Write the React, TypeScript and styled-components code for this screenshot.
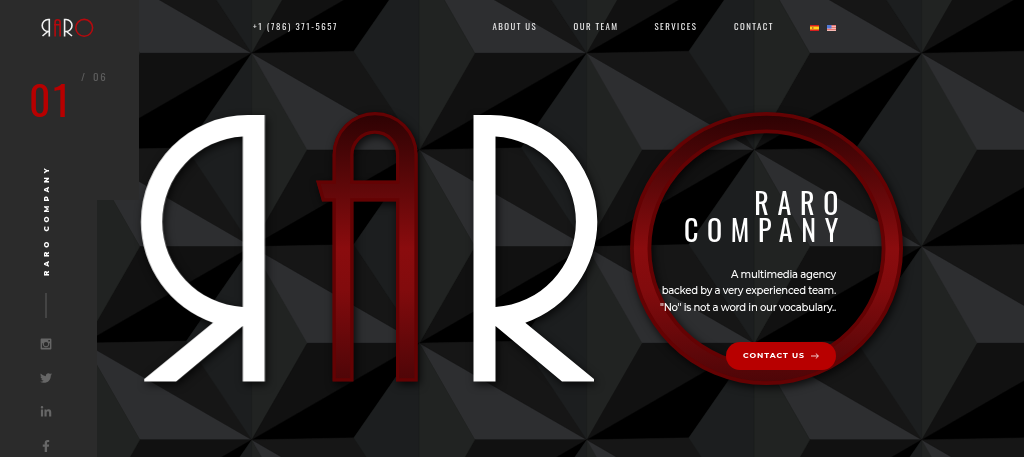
import React from "react";
import styled, { createGlobalStyle } from "styled-components";
import { FaTwitter, FaLinkedinIn, FaFacebookF } from "react-icons/fa";

const Global = createGlobalStyle`
  * { box-sizing: border-box; }
  body { margin: 0; background: #161616; overflow: hidden; }
`;

const condensed = `"Oswald", "Roboto", "Liberation Sans", sans-serif`;
const rounded = `"Montserrat", "Inter", "Liberation Sans", sans-serif`;

const Page = styled.div`
  position: relative;
  width: 100%;
  height: 457px;
  overflow: hidden;
  display: grid;
  grid-template-columns: 97px 1fr;
  color: #fff;
`;

const Backdrop = styled.svg`
  position: absolute;
  top: 0;
  left: 0;
  z-index: 0;
`;

const Sidebar = styled.aside`
  position: relative;
  z-index: 1;
  height: 457px;
  background: #2b2b2b;
  display: flex;
  flex-direction: column;
`;

const Ledge = styled.div`
  width: 139px;
  height: 200px;
  background: #2b2b2b;
  padding: 18px 0 0 41px;
`;

const Counter = styled.div`
  display: flex;
  align-items: flex-start;
  margin: 34px 0 0 -12px;
  font-family: ${condensed};
  white-space: nowrap;
`;

const Current = styled.div`
  width: 41px;
  color: #b80000;
  font-size: 41.5px;
  line-height: 52px;
  letter-spacing: 2.8px;
`;

const Total = styled.div`
  margin-left: 11px;
  color: #5c5c5c;
  font-size: 10.8px;
  line-height: 8px;
  letter-spacing: 1.5px;
  word-spacing: 2.6px;
`;

const Rail = styled.div`
  display: flex;
  flex-direction: column;
  align-items: center;
  width: 92px;
  margin-top: -35px;
`;

const Upright = styled.div`
  writing-mode: vertical-rl;
  transform: rotate(180deg);
  height: 111px;
  margin-left: 1px;
  font: 800 7.2px/10px ${rounded};
  letter-spacing: 4px;
  white-space: nowrap;
`;

const Rule = styled.div`
  width: 1.5px;
  height: 25px;
  margin-top: 17px;
  background: #444;
`;

const Socials = styled.div`
  display: flex;
  flex-direction: column;
  align-items: center;
  gap: 22px;
  margin-top: 20.3px;
  color: #666;
  svg { display: block; width: 12px; height: 12px; }
`;

const Main = styled.main`
  position: relative;
  z-index: 1;
  display: flex;
  flex-direction: column;
`;

const Nav = styled.nav`
  display: flex;
  align-items: center;
  height: 53px;
  padding-left: 156px;
  color: #e6e6e6;
  font: 400 8.8px/12px ${condensed};
  white-space: nowrap;
`;

const Phone = styled.span`
  width: 239.5px;
  letter-spacing: 1.6px;
`;

const NavLink = styled.a<{ $w: number }>`
  width: ${(p) => p.$w}px;
  letter-spacing: 1.45px;
`;

const Flags = styled.div`
  display: flex;
  gap: 8px;
  margin-top: 3px;
  svg { display: block; }
`;

const Hero = styled.section`
  width: 739px;
  padding-top: 136px;
  display: flex;
  flex-direction: column;
  align-items: flex-end;
`;

const Title = styled.h1`
  margin: 0 -11px 0 0;
  font: 400 28px/27px ${condensed};
  letter-spacing: 8.7px;
  text-align: right;
`;

const Copy = styled.p`
  margin: 23.5px 0 0;
  font: 500 10.1px/16.7px ${rounded};
  letter-spacing: -0.27px;
  text-align: right;
  white-space: nowrap;
`;

const Button = styled.button`
  display: flex;
  align-items: center;
  justify-content: center;
  gap: 6px;
  width: 110px;
  height: 27.5px;
  margin-top: 25.5px;
  padding: 0;
  border: 0;
  border-radius: 14px;
  background: #b80000;
  color: #fff;
  font: 700 7.8px/1 ${rounded};
  letter-spacing: 0.95px;
`;

type Pt = [number, number];
const facets: { fill: string; pts: Pt[] }[] = [
  { fill: "#2d2e30", pts: [[0, 0], [-167.5, -96.7], [-112, 0]] },
  { fill: "#161616", pts: [[0, 0], [-167.5, -96.7], [-65.5, -98.7]] },
  { fill: "#1c1e1f", pts: [[0, 0], [-65.5, -98.7], [0, -193.3]] },
  { fill: "#212322", pts: [[0, 0], [55.5, -96.7], [0, -193.3]] },
  { fill: "#111111", pts: [[0, 0], [-112, 0], [-167.5, 96.7]] },
  { fill: "#000000", pts: [[0, 0], [-167.5, 96.7], [-65.5, 94.7]] },
];
const nodes: Pt[] = [];
for (let i = -1; i < 5; i++)
  for (let j = -1; j < 4; j++) {
    nodes.push([251.8 + 335 * i, 53.2 + 193.3 * j]);
    nodes.push([84.3 + 335 * i, 149.9 + 193.3 * j]);
  }

const letterR =
  "M473.5 115H490.5A106.8 106.8 0 0 1 597.3 221.8A106.8 106.8 0 0 1 525.3 322.7L594 379V381.5H562L495.5 326V381.5H473.5Z" +
  "M495.5 136.5A85.4 85.4 0 0 1 575.9 221.7A85.4 85.4 0 0 1 495.5 306.9Z";
const letterA = "M332.5 381.5V201.5H322L316 180.5H332.5V154.5A42.6 42.6 0 0 1 417.7 154.5V381.5H396V201.5H353.5V381.5ZM353.5 180.5H396V155A21.25 21.25 0 0 0 353.5 155Z";
const ring = "M630 248.5a136.5 136.5 0 1 0 273 0a136.5 136.5 0 1 0-273 0ZM651.3 248.5a115.2 115.2 0 1 1 230.4 0a115.2 115.2 0 1 1-230.4 0Z";

const Wall = () => (
  <Backdrop width="1024" height="457" viewBox="0 0 1024 457">
    <defs>
      <linearGradient id="blood" gradientUnits="userSpaceOnUse" x1="0" y1="112" x2="0" y2="385">
        <stop offset="0" stopColor="#2c0203" />
        <stop offset="0.5" stopColor="#8a0c0e" />
        <stop offset="0.65" stopColor="#820b0d" />
        <stop offset="1" stopColor="#4c0507" />
      </linearGradient>
      <filter id="cast" x="-10%" y="-10%" width="120%" height="120%" colorInterpolationFilters="sRGB">
        <feDropShadow dx="2" dy="3" stdDeviation="4" floodColor="#000" floodOpacity="0.75" />
      </filter>
      <clipPath id="clipA"><path d={letterA} clipRule="evenodd" /></clipPath>
      <clipPath id="clipO"><path d={ring} clipRule="evenodd" /></clipPath>
    </defs>
    {nodes.map(([x, y], n) => (
      <g key={n} transform={`translate(${x} ${y})`}>
        {facets.map((f) => (
          <polygon key={f.fill} points={f.pts.join(" ")} fill={f.fill} stroke={f.fill} strokeWidth="0.4" />
        ))}
      </g>
    ))}
    <g filter="url(#cast)" fill="#fff" fillRule="evenodd">
      <path d={letterR} />
      <path d={letterR} transform="translate(738.3 0) scale(-1 1)" />
    </g>
    <g filter="url(#cast)" fill="url(#blood)" fillRule="evenodd" stroke="#640203">
      <path d={letterA} clipPath="url(#clipA)" strokeWidth="6.6" />
      <path d={ring} clipPath="url(#clipO)" strokeWidth="7.6" />
    </g>
  </Backdrop>
);

const LogoMark = styled.svg`
  display: block;
`;

const Logo = () => (
  <LogoMark width="53" height="20" viewBox="0 0 53 20" fill="none" strokeWidth="1.6">
    <g stroke="#f2f2f2">
      <path d="M8.3 18.5V1.5H7.2A6 6 0 0 0 7.2 13.5H8.3M6.8 13.5L1.5 18" />
      <path d="M23.6 18.5V1.5H25A6 6 0 0 1 25 13.5H23.6M25.5 13.5L31 18" />
    </g>
    <g stroke="#b50a0e">
      <path d="M14.1 18.5V4.2A2.5 2.5 0 0 1 19.1 4.2V18.5M13 6.7H19" />
      <circle cx="43.2" cy="9.8" r="8.4" />
    </g>
  </LogoMark>
);

const Instagram = () => (
  <svg viewBox="0 0 12 12">
    <path
      fill="currentColor"
      fillRule="evenodd"
      d="M1.5.6H10.5Q11.4.6 11.4 1.5V10.5Q11.4 11.4 10.5 11.4H1.5Q.6 11.4.6 10.5V1.5Q.6.6 1.5.6ZM2 5.2V9.7H10V5.2H9.2A3.3 3.3 0 1 1 2.8 5.2ZM8.3 1.9V3.6H10V1.9ZM6 3.9A2.2 2.2 0 1 0 6 8.3A2.2 2.2 0 1 0 6 3.9Z"
    />
  </svg>
);

const Spain = () => (
  <svg width="9" height="6" viewBox="0 0 9 6">
    <rect width="9" height="6" fill="#d81e1e" />
    <rect y="1.5" width="9" height="3" fill="#ffd21c" />
    <rect x="2" y="2" width="1.5" height="2" fill="#c87828" />
  </svg>
);

const Usa = () => (
  <svg width="9" height="6" viewBox="0 0 9 6">
    <rect width="9" height="6" fill="#f4b9b4" />
    <path d="M0 .5H9M0 2.5H9M0 4.5H9" stroke="#e2645f" strokeWidth=".8" />
    <rect width="4.5" height="3.5" fill="#5379d8" />
  </svg>
);

const links = [
  { label: "ABOUT US", w: 81 },
  { label: "OUR TEAM", w: 81 },
  { label: "SERVICES", w: 79.5 },
  { label: "CONTACT", w: 75.5 },
];

export default function App() {
  return (
    <>
      <Global />
      <Page>
        <Wall />
        <Sidebar>
          <Ledge>
            <Logo />
            <Counter>
              <Current>01</Current>
              <Total>/ 06</Total>
            </Counter>
          </Ledge>
          <Rail>
            <Upright>RARO COMPANY</Upright>
            <Rule />
            <Socials>
              <Instagram />
              <FaTwitter />
              <FaLinkedinIn />
              <FaFacebookF />
            </Socials>
          </Rail>
        </Sidebar>
        <Main>
          <Nav>
            <Phone>+1 (786) 371-5657</Phone>
            {links.map((l) => (
              <NavLink key={l.label} $w={l.w}>{l.label}</NavLink>
            ))}
            <Flags><Spain /><Usa /></Flags>
          </Nav>
          <Hero>
            <Title>RARO<br />COMPANY</Title>
            <Copy>
              A multimedia agency<br />backed by a very experienced team.<br />"No" is not a word in our vocabulary..
            </Copy>
            <Button>
              CONTACT US
              <svg width="8" height="6" viewBox="0 0 8 6" fill="none" stroke="#fff" strokeWidth=".8"><path d="M0 3H7.3M4.8.5L7.4 3L4.8 5.5" /></svg>
            </Button>
          </Hero>
        </Main>
      </Page>
    </>
  );
}
